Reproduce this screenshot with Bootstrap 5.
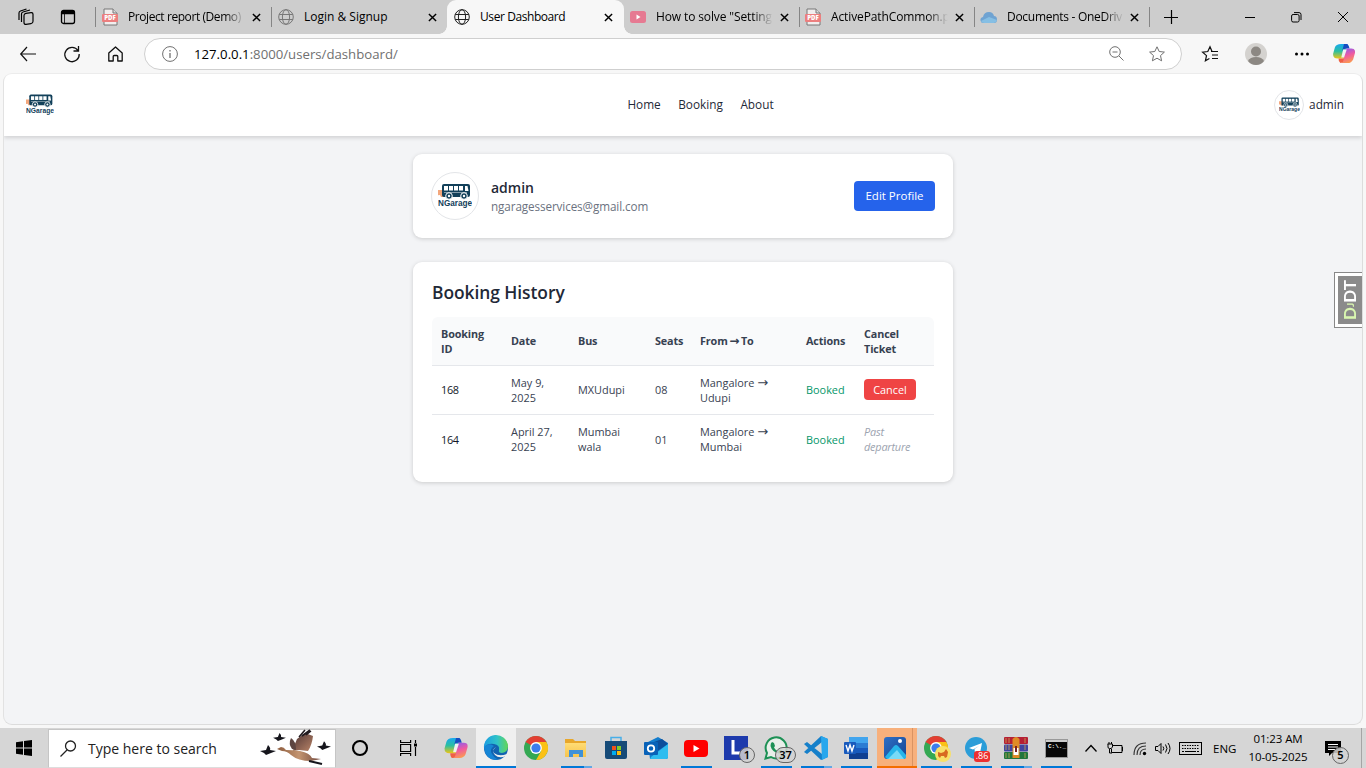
<!DOCTYPE html>
<html lang="en">
<head>
<meta charset="utf-8">
<meta name="viewport" content="width=device-width, initial-scale=1">
<title>User Dashboard</title>
<link href="https://cdn.jsdelivr.net/npm/bootstrap@5.3.0/dist/css/bootstrap.min.css" rel="stylesheet">
<style>
body{font-family:"Open Sans","Noto Sans",sans-serif;font-size:11.5px;line-height:15px;color:#374151;background:#f7f7f7;width:1366px;height:768px;overflow:hidden}
svg{display:block;flex:none;overflow:visible}
.ln{fill:none;stroke:currentColor}
.arw{font-family:"DejaVu Sans",sans-serif;font-size:13px;line-height:10px}
/* tab strip */
.strip{height:34px;background:#cdcdcd;color:#000;font-size:12px}
.lead-icons{width:95px;padding-left:17px;gap:25px}
.tab{width:176px;height:34px;padding-left:7px;position:relative}
.tab.sep::before{content:"";position:absolute;left:0;top:7px;width:1px;height:20px;background:#858585}
.tab .ttl{margin-left:10px;width:118px;white-space:nowrap;line-height:18px}
.fade-r{-webkit-mask-image:linear-gradient(90deg,#000 82%,transparent 99%);mask-image:linear-gradient(90deg,#000 82%,transparent 99%)}
.tab .x{margin-left:6px}
.tab.short{width:175px}
.tab.on{background:#f7f7f7;border-radius:9px 9px 0 0;width:177px}
.tab.on::before,.tab.on::after{content:"";position:absolute;bottom:0;width:8px;height:8px}
.tab.on::before{left:-8px;background:radial-gradient(circle at 0 0,#cdcdcd 7.5px,#f7f7f7 8px)}
.tab.on::after{right:-8px;background:radial-gradient(circle at 100% 0,#cdcdcd 7.5px,#f7f7f7 8px)}
.tight1{letter-spacing:-.28px}.tight2{letter-spacing:-.42px}.tight3{letter-spacing:-.12px}
/* toolbar */
.bar{height:39px;background:#f7f7f7;color:#111}
.addr{width:1038px;height:32px;border:1px solid #cfcfcf;border-radius:16px;background:#fff;padding:0 16px 0 17px;font-size:13.2px;color:#707070}
.addr b{font-weight:400;color:#000}
/* page */
.pagebox{width:1360px;height:652px;margin-left:3px;border:1px solid #dcdcdc;border-top-color:#ececec;border-left-color:#e2e2e2;border-radius:9px;background:#f3f4f6;overflow:hidden;position:relative}
.site{height:62px;background:#fff;box-shadow:0 2px 4px rgba(0,0,0,.14);padding:0 18px 0 18px;color:#1f2937;font-size:11.8px}
.site .links{gap:17.5px;margin-top:-1px}
.adm{margin-top:-1px}
.ava{border:1px solid #e3e5e8;border-radius:50%;background:#fff;display:flex;align-items:center;justify-content:center}
.panel{width:540px;background:#fff;border-radius:9px;box-shadow:0 1px 4px rgba(0,0,0,.17)}
.uname{font-size:14px;line-height:20px;font-weight:600;color:#1f2937}
.mail{font-size:11.7px;line-height:17px;color:#6b7280;letter-spacing:-.1px}
.btn-edit{width:81px;height:30px;background:#2563eb;color:#fff;border-radius:4px;font-size:11.5px;padding:0;border:0}
.bh{font-size:17.4px;line-height:21px;font-weight:600;color:#1f2937;letter-spacing:-.05px}
.hist{width:502px;table-layout:fixed;font-size:10.9px;border-collapse:separate;border-spacing:0}
.hist td,.hist th{height:49px;padding:0 0 1px 9px;vertical-align:middle;border-bottom:1px solid #e5e7eb;line-height:15px;white-space:nowrap}
.hist th{background:#f9fafb;font-weight:700;font-size:10.8px;letter-spacing:-.12px}
.hist th .arw{font-size:12px;margin:0 -1px}
.hist th:first-child{border-top-left-radius:6px}.hist th:last-child{border-top-right-radius:6px}
.hist tr:last-child td{border-bottom:0}
.hist .idc{color:#111827;font-weight:500;letter-spacing:-.3px}
.btn-cancel{width:52px;height:21px;line-height:20px;background:#ef4444;color:#fff;border:0;border-radius:4px;font-size:10.9px;padding:0;display:block}
.hist .booked{color:#059669;font-weight:500}
.djdt{position:absolute;right:0;top:198px;width:28px;height:56px;border:1px solid #888;border-right:0;background:#fff;padding:3px 0 3px 3px}
.djdt div{background:#8b8b8b;height:100%;writing-mode:vertical-rl;transform:rotate(180deg);text-align:center;color:#fff;font:bold 17px/24px "Lato",sans-serif}
.djdt i{color:#d9f7b0;font-style:normal}
.djdt small{font-size:10px}
/* taskbar */
.tb{height:40px;background:#d6d6d6;color:#000;margin-top:3px}
.find{width:288px;height:39px;background:#fff;border:1px solid #c5c5c5;border-bottom-color:#ddd;padding-left:11px;font-size:14px;color:#222;margin-left:48px}
.app{width:40px;height:40px;position:relative;display:flex;align-items:center;justify-content:center;flex:none}
.app.run::after{content:"";position:absolute;left:5px;width:31px;bottom:0;height:2px;background:#0078d7}
.app.multi::after{background:linear-gradient(90deg,#0078d7 75%,#62a8e5 75%)}
.app.cur{background:#efefef}.app.cur::after{left:0;width:40px}
.app.alert1{background:linear-gradient(90deg,#f7b07c 88%,#d99362 88%,#d99362 91%,#f7b07c 91%)}
.app.alert1::after{left:0;width:40px;background:#f36d00}
.cnt{position:absolute;border:1px solid #666;background:rgba(210,210,210,.85);border-radius:9px;font:600 11px/14px "Noto Sans",sans-serif;height:16px;min-width:16px;text-align:center}
.tray{font-size:11.5px}
</style>
</head>
<body class="d-flex flex-column">
<svg width="0" height="0" class="position-absolute">
<defs>
<linearGradient id="cpa" x1="0" y1="0" x2="0" y2="1"><stop offset="0" stop-color="#18a8f0"/><stop offset=".5" stop-color="#2bbfa0"/><stop offset="1" stop-color="#f0c514"/></linearGradient>
<linearGradient id="cpb" x1="0.2" y1="0" x2=".5" y2="1"><stop offset="0" stop-color="#8b5cf0"/><stop offset=".5" stop-color="#ef5aa0"/><stop offset="1" stop-color="#fb9b50"/></linearGradient>
<linearGradient id="edg" x1="0" y1=".3" x2="1" y2=".3"><stop offset="0" stop-color="#1b9de2"/><stop offset=".55" stop-color="#30c3c8"/><stop offset="1" stop-color="#63d655"/></linearGradient>
<linearGradient id="fld" x1="0" y1="0" x2="0" y2="1"><stop offset="0" stop-color="#ffdc75"/><stop offset="1" stop-color="#f6c44e"/></linearGradient>
<linearGradient id="pho" x1="0" y1="0" x2="1" y2="1"><stop offset="0" stop-color="#2d6fc6"/><stop offset="1" stop-color="#164592"/></linearGradient>
<linearGradient id="gse" x1="0" y1="0" x2="1" y2="0"><stop offset="0" stop-color="#8d5c3e"/><stop offset=".5" stop-color="#c39470"/><stop offset="1" stop-color="#70473d"/></linearGradient>
<linearGradient id="wng" x1="0" y1="0" x2="1" y2="1"><stop offset="0" stop-color="#4d3434"/><stop offset="1" stop-color="#b98468"/></linearGradient>
<symbol id="x" viewBox="0 0 10 10"><path d="M1 1l8 8M9 1L1 9" fill="none" stroke="#000" stroke-width="1.6"/></symbol>
<symbol id="pdf" viewBox="0 0 16 18"><path d="M2 1h9l4 4v12H2z" fill="#f1eeee" stroke="#777" stroke-width="1"/><path d="M11 1v4h4" fill="#ddd" stroke="#777"/><rect x="0" y="6" width="16" height="8" rx="1" fill="#ec7f7f"/><text x="8" y="12.4" text-anchor="middle" font-family="Open Sans" font-weight="800" font-size="6" fill="#fff" letter-spacing="0">PDF</text></symbol>
<symbol id="globe" viewBox="0 0 16 16"><g fill="none" stroke="currentColor"><circle cx="8" cy="8" r="7.3"/><ellipse cx="8" cy="8" rx="3.6" ry="7.3"/><path d="M1.2 5.5h13.6M1.2 10.5h13.6"/></g></symbol>
<symbol id="bus" viewBox="0 0 34 24"><path d="M0 6h6v7H3l-1-2-3 .5 1-2-2-1z" fill="#f3a77c"/><rect x="4" y="0" width="28" height="13" rx="2" fill="#12405a"/><g fill="#fff"><rect x="6" y="2" width="4" height="4.500"/><rect x="11" y="2" width="4" height="4.500"/><rect x="16" y="2" width="4" height="4.500"/><rect x="21" y="2" width="4" height="4.500"/><path d="M27 2h2.500l1 5H27z"/><rect x="6" y="8" width="23" height=".8" opacity=".6"/></g><g fill="#12405a" stroke="#fff"><circle cx="11" cy="12" r="3.300"/><circle cx="26" cy="12" r="3.300"/></g><circle cx="11" cy="12" r="1.200" fill="#fff"/><circle cx="26" cy="12" r="1.200" fill="#fff"/><text x="0" y="22" font-family="Liberation Sans" font-weight="700" font-size="8.5" fill="#12405a" textLength="34" lengthAdjust="spacingAndGlyphs">NGarage</text></symbol>
<symbol id="cop" viewBox="0 0 24 23"><path d="M9 1h7l-4 16H5q-5 0-5-5L2 5q1-4 7-4z" fill="url(#cpa)"/><path d="M12 1h3q2 0 3 5h-4q-3 0-4 3z" fill="#164cc0"/><path d="M14 6h6q5 0 4 5l-2 7q-2 4-6 4H9l3-6z" fill="url(#cpb)"/><path d="M6 17h6l-1 3q-1 2-3 2-2-1-2-5z" fill="#ef6044"/><path d="M11 7h4l-3 9H9z" fill="#f1f1f1"/></symbol>
<symbol id="chr" viewBox="0 0 24 24"><circle cx="12" cy="12" r="12" fill="#34a853"/><path d="M12 12L1.6 6A12 12 0 0 1 22.4 6z" fill="#e23f33"/><path d="M12 6h10.4A12 12 0 0 1 12 24l5.2-9z" fill="#fbc116"/><circle cx="12" cy="12" r="5.9" fill="#fff"/><circle cx="12" cy="12" r="4.6" fill="#3b7ded"/></symbol>
<symbol id="bird" viewBox="0 0 16 10"><path d="M0 6l6-1 2-5q3 3 2 5l6 1-5 2-5 2-2-2z" fill="#15151c"/></symbol>
</defs>
</svg>

<header class="strip d-flex align-items-center">
  <div class="lead-icons d-flex align-items-center">
    <svg class="ln" width="18" height="18" viewBox="0 0 18 18" stroke-width="1.2"><rect x="7" y="5" width="9" height="11" rx="2" transform="skewY(-8) translate(0 1.6)"/><path d="M4.500 14V6q0-1.500 1.500-2l7-2M2 12V5q0-1.500 1.500-2l6-2"/></svg>
    <svg class="ln" width="16" height="16" viewBox="0 0 16 16" stroke-width="1.300"><rect x="1.500" y="1.500" width="13" height="13" rx="2"/><path d="M1.500 3.500h13" stroke-width="3.500"/><path d="M4.500 5v9" stroke-width=".8"/></svg>
  </div>
  <div class="tab sep d-flex align-items-center"><svg width="16" height="18"><use href="#pdf"/></svg><span class="ttl fade-r tight2">Project report (Demo)</span><svg class="x" width="9" height="9"><use href="#x"/></svg></div>
  <div class="tab sep d-flex align-items-center"><svg width="16" height="16" style="color:#777"><use href="#globe"/></svg><span class="ttl">Login &amp; Signup</span><svg class="x" width="9" height="9"><use href="#x"/></svg></div>
  <div class="tab on d-flex align-items-center"><svg width="16" height="16" style="color:#222"><use href="#globe"/></svg><span class="ttl tight2">User Dashboard</span><svg class="x" width="9" height="9"><use href="#x"/></svg></div>
  <div class="tab short d-flex align-items-center" style="padding-left:6px"><svg width="16" height="12" viewBox="0 0 16 12"><rect width="16" height="12" rx="2.500" fill="#e67a92"/><path d="M6.500 3.500L10.500 6l-4 2.500z" fill="#fff"/></svg><span class="ttl fade-r tight3">How to solve "Setting</span><svg class="x" width="9" height="9"><use href="#x"/></svg></div>
  <div class="tab sep short d-flex align-items-center" style="padding-left:6px"><svg width="16" height="18"><use href="#pdf"/></svg><span class="ttl fade-r tight3">ActivePathCommon.p</span><svg class="x" width="9" height="9"><use href="#x"/></svg></div>
  <div class="tab sep short d-flex align-items-center"><svg width="16" height="11" viewBox="0 0 16 11"><path d="M3 11a3 3 0 0 1-1-6q1-5 6-5 4 0 5 4 3 0 3 3.500T13 11z" fill="#6fa3d2"/><path d="M3 11q-2 0-3-2l8-4 8 3q-1 3-3 3z" fill="#86bfe4"/></svg><span class="ttl fade-r tight1">Documents - OneDriv</span><svg class="x" width="9" height="9" style="margin-left:5px"><use href="#x"/></svg></div>
  <div class="tab sep d-flex align-items-center flex-fill" style="padding-left:15px"><svg class="ln" width="14" height="14" viewBox="0 0 14 14"><path d="M7.500 0v14M0 7.500h14" stroke-width="1.200"/></svg>
    <svg class="ln ms-auto" width="10" height="10"><path d="M0 5.500h10"/></svg>
    <svg class="ln" width="11" height="11" viewBox="0 0 11 11" style="margin-left:36px"><rect x=".6" y="2.500" width="7.500" height="7.500" rx="1.500"/><path d="M3 .6h5q2 0 2 2V8"/></svg>
    <svg class="ln" width="10" height="10" style="margin-left:36px;margin-right:18px"><path d="M0 0l10 10M10 0L0 10"/></svg>
  </div>
</header>

<div class="bar d-flex align-items-center">
  <svg class="ln" width="16" height="14" viewBox="0 0 16 14" style="margin-left:20px"><path d="M7 0L.7 7 7 14M.7 7H16" stroke-width="1.200"/></svg>
  <svg class="ln" width="16" height="16" viewBox="0 0 16 16" style="margin-left:28px"><path d="M14 4.500A7.200 7.200 0 1 0 15.200 8M14.500 0v5h-5" stroke-width="1.300"/></svg>
  <svg class="ln" width="15" height="16" viewBox="0 0 15 16" style="margin-left:28px"><path d="M.8 7L7.500 1l6.700 6v8H9.800v-4.500q0-1-1-1H6.200q-1 0-1 1V15H.8z" stroke-width="1.300" stroke-linejoin="round"/></svg>
  <div class="addr d-flex align-items-center" style="margin-left:21px">
    <svg width="16" height="16" viewBox="0 0 16 16"><circle cx="8" cy="8" r="7.400" fill="none" stroke="#707070"/><path d="M8 7v5M8 4v1.600" stroke="#707070" stroke-width="1.300"/></svg>
    <span style="margin-left:16px;padding-top:1px"><b>127.0.0.1</b>:8000/users/dashboard/</span>
    <svg class="ln ms-auto" width="15" height="15" viewBox="0 0 15 15"><circle cx="6" cy="6" r="5.300"/><path d="M10 10l4.500 4.500M3.500 6h5"/></svg>
    <svg class="ln" width="16" height="16" viewBox="0 0 16 16" style="margin-left:25px"><path d="M8 .8l2.200 4.700 5.200.6-3.900 3.500 1.100 5.200L8 12.200l-4.600 2.600 1.100-5.200L.6 6.100l5.200-.6z" stroke-linejoin="round"/></svg>
  </div>
  <svg class="ln" width="17" height="16" viewBox="0 0 17 16" style="margin-left:20px"><path d="M9 5.500H10L8 .8 5.800 5.500.6 6.100l3.900 3.500-1.100 5.200 4-2.300M10 5.500h6M10 9h6M10 12.500h6" stroke-width="1.200"/></svg>
  <svg width="22" height="22" viewBox="0 0 22 22" style="margin-left:26px"><circle cx="11" cy="11" r="11" fill="#d4d2cf"/><circle cx="11" cy="8.500" r="5" fill="#8c8883"/><path d="M3 18q2-4 8-4t8 4q-3 4-8 4t-8-4z" fill="#8c8883"/></svg>
  <svg width="14" height="4" viewBox="0 0 14 4" style="margin-left:28px"><circle cx="1.500" cy="2" r="1.500"/><circle cx="7" cy="2" r="1.500"/><circle cx="12.500" cy="2" r="1.500"/></svg>
  <svg width="22" height="21" style="margin-left:24px"><use href="#cop"/></svg>
</div>

<main class="pagebox">
  <nav class="site d-flex align-items-center justify-content-between position-relative">
    <svg width="28" height="21" style="margin-left:4px;margin-top:-1px"><use href="#bus"/></svg>
    <div class="links d-flex position-absolute start-0 end-0 justify-content-center" style="padding-left:35px"><span>Home</span><span>Booking</span><span>About</span></div>
    <div class="d-flex align-items-center"><span class="ava" style="width:30px;height:30px"><svg width="21" height="16"><use href="#bus"/></svg></span><span class="adm" style="margin-left:5px">admin</span></div>
  </nav>
  <section class="panel mx-auto d-flex align-items-center px-3" style="height:84px;margin-top:18px">
    <span class="ava" style="width:48px;height:48px;margin-left:2px"><svg width="34" height="26"><use href="#bus"/></svg></span>
    <div style="margin-left:12px"><div class="uname">admin</div><div class="mail">ngaragesservices@gmail.com</div></div>
    <button class="btn btn-edit ms-auto" style="margin-right:2px">Edit Profile</button>
  </section>
  <section class="panel mx-auto" style="height:220px;margin-top:24px;padding:20px 19px">
    <h2 class="bh mb-0">Booking History</h2>
    <table class="hist" style="margin-top:14px">
      <colgroup><col style="width:70px"><col style="width:67px"><col style="width:77px"><col style="width:45px"><col style="width:106px"><col style="width:58px"><col></colgroup>
      <thead><tr><th>Booking<br>ID</th><th>Date</th><th>Bus</th><th>Seats</th><th>From <span class="arw">→</span> To</th><th>Actions</th><th>Cancel<br>Ticket</th></tr></thead>
      <tbody>
      <tr><td class="idc">168</td><td>May 9,<br>2025</td><td>MXUdupi</td><td>08</td><td>Mangalore <span class="arw">→</span><br>Udupi</td><td class="booked">Booked</td><td><button class="btn btn-cancel">Cancel</button></td></tr>
      <tr><td class="idc">164</td><td>April 27,<br>2025</td><td>Mumbai<br>wala</td><td>01</td><td>Mangalore <span class="arw">→</span><br>Mumbai</td><td class="booked">Booked</td><td class="fst-italic" style="color:#9ca3af;letter-spacing:-.2px">Past<br>departure</td></tr>
      </tbody>
    </table>
  </section>
  <aside class="djdt"><div><i>D<small>J</small></i>DT</div></aside>
</main>

<footer class="tb d-flex align-items-center position-relative">
  <svg class="position-absolute" style="left:16px" width="16" height="16" viewBox="0 0 16 16"><path d="M0 2.200l7-1v6.300H0zM8 1l8-1v7.500H8zM0 8.500h7v6.300l-7-1zM8 8.500h8V16l-8-1z"/></svg>
  <div class="find d-flex align-items-center">
    <svg class="ln" width="16" height="17" viewBox="0 0 16 17"><circle cx="10.500" cy="6" r="5" stroke-width="1.300"/><path d="M7 10L.5 16.500" stroke-width="1.300"/></svg>
    <span style="margin-left:12px">Type here to search</span>
    <svg class="ms-auto" width="72" height="36" viewBox="0 0 72 36" style="margin-right:3px"><g><use href="#bird" x="13" y="3" width="13" height="8"/><use href="#bird" x="0" y="15" width="16" height="10"/><use href="#bird" x="57" y="11" width="14" height="9"/></g><path d="M37 9l8-6 8 3q-1 9-5 15l-9-1-6 1q1-6 4-12z" fill="url(#wng)"/><path d="M39 7l6-7M42 6l8-6M46 5l5-4" stroke="#221b20" stroke-width="1.600"/><path d="M31 8q5 3 5 12l-4-1q-4-5-1-11z" fill="#5d4541"/><path d="M17 19l4-2q3 0 5 3 7 0 14 1 10 2 12 7l9 1-10 2q-13 0-20-6-4-4-9-4z" fill="url(#gse)"/><path d="M49 31l13 3" stroke="#15151c" stroke-width="2"/></svg>
  </div>
  <div class="app" style="width:48px"><svg width="16" height="16"><circle cx="8" cy="8" r="7" fill="none" stroke="#000" stroke-width="2.100"/></svg></div>
  <div class="app" style="width:48px"><svg class="ln" width="17" height="16" viewBox="0 0 17 16" stroke-width="1.200"><path d="M.6 0v2.500h10V0M.6 16v-2.500h10V16M.6 4.500h10v7H.6zM15.500 0v3M15.500 7v9"/><path d="M14 5h3" stroke-width="3"/></svg></div>
  <div class="app" style="margin-left:4px"><svg width="24" height="22"><use href="#cop"/></svg></div>
  <div class="app run cur"><svg width="24" height="24" viewBox="0 0 24 24"><circle cx="12" cy="12" r="12" fill="#1263b1"/><path d="M0 12A12 12 0 0 1 24 10q0 6-6 7-4 0-3-3 1-5-5-6Q3 7 0 12z" fill="url(#edg)"/><path d="M0 11q5-5 10-1-5 3-2 8 2 4 6 5.500Q2 25 0 12z" fill="#1685d5"/><path d="M12 11q-4 2-2 6 5 4 13 1l-1 2q-7 3-11-1-4-4 1-8z" fill="#efefef"/></svg></div>
  <div class="app"><svg width="24" height="24"><use href="#chr"/></svg></div>
  <div class="app run multi"><svg width="22" height="18" viewBox="0 0 22 18"><path d="M0 0h8l2 2h11v16H0z" fill="#e8a72b"/><path d="M0 4h21v14H0z" fill="url(#fld)"/><path d="M4 18v-7h14v7h-4v-3H8v3z" fill="#3e91d8"/></svg></div>
  <div class="app"><svg width="24" height="24" viewBox="0 0 24 24"><path d="M7 6V1.500h10V6" fill="none" stroke="#48aee8" stroke-width="1.500"/><path d="M1 5h22v16q0 2-2 2H3q-2 0-2-2z" fill="#164b78"/><path d="M8 10h4v4H8z" fill="#f1511b"/><path d="M13 10h4v4h-4z" fill="#80cc28"/><path d="M8 15h4v4H8z" fill="#00adef"/><path d="M13 15h4v4h-4z" fill="#fbbc09"/></svg></div>
  <div class="app"><svg width="24" height="24" viewBox="0 0 24 24"><path d="M4 6l10-5 10 6v14q0 2-2 2H6z" fill="#147dcd"/><path d="M10 6l8-3 6 5-12 8z" fill="#0d4f9c"/><path d="M7 21l17-13v13q0 2-2 2H6z" fill="#2fbdef"/><rect y="6" width="14" height="13" rx="1" fill="#0962b8"/><circle cx="7" cy="12.500" r="3.200" fill="none" stroke="#fff" stroke-width="1.800"/></svg></div>
  <div class="app run"><svg width="24" height="17" viewBox="0 0 24 17"><rect width="24" height="17" rx="4" fill="#f00"/><path d="M9.500 5l6 3.500-6 3.500z" fill="#fff"/></svg></div>
  <div class="app"><svg width="24" height="24" viewBox="0 0 24 24"><path d="M0 0h24v24H0z" fill="#1d3aac"/><path d="M9 4v13h7" fill="none" stroke="#fff" stroke-width="3"/></svg><span class="cnt" style="left:23px;top:19px">1</span></div>
  <div class="app run"><svg width="24" height="24" viewBox="0 0 24 24"><path d="M1.500 22.500L3 17A10.500 10.500 0 1 1 7 21z" fill="#e8efe9" stroke="#1d9155" stroke-width="2"/><path d="M8 6l2 1 1 3-1 1.500q1 2 3.500 3.500l1.500-2 3 1.500q0 3-3 3Q8 16 6.500 10q0-3 1.500-4z" fill="#1d9155"/></svg><span class="cnt" style="left:19px;top:19px;width:21px;z-index:2">37</span></div>
  <div class="app run multi"><svg width="24" height="24" viewBox="0 0 24 24"><path d="M17 0l7 3v18l-7 3L0 8l3-2 15 12V6L3 18l-3-2z" fill="#1680ca"/><path d="M17 0l7 3v18l-6 3z" fill="#28a7ed"/></svg></div>
  <div class="app run"><svg width="24" height="22" viewBox="0 0 24 22"><path d="M5 0h19v6H5z" fill="#41a5ee"/><path d="M5 6h19v5H5z" fill="#2b7cd3"/><path d="M5 11h19v5H5z" fill="#185abd"/><path d="M5 16h19v6H5z" fill="#103f91"/><rect y="5" width="12" height="12" rx="1" fill="#185abd"/><path d="M2 8l2 6 2-6 2 6 2-6" fill="none" stroke="#fff" stroke-width="1.400"/></svg></div>
  <div class="app run alert1" style="left:1px"><svg width="23" height="22" viewBox="0 0 23 22" style="margin-right:3px"><rect width="22" height="22" rx="3" fill="url(#pho)"/><path d="M1 20L10 9q2-2 4 0l8 9v2q0 2-3 2H3z" fill="#27b5ea"/><path d="M4 22l9-9 7 9z" fill="#78daf6"/><circle cx="16" cy="4" r="2" fill="#fff"/></svg></div>
  <div class="app run"><svg width="24" height="24"><use href="#chr"/></svg><svg class="position-absolute" style="left:19px;top:18px" width="16" height="16" viewBox="0 0 16 16"><circle cx="8" cy="8" r="8" fill="#f8e068"/><path d="M3 6l3 1 3-1 2-3 2 3-1 5-2 1-1-2H6l-1 2-2-2z" fill="#d86a20"/></svg></div>
  <div class="app run"><svg width="22" height="22" viewBox="0 0 22 22"><circle cx="11" cy="11" r="11" fill="#2b9dd8"/><path d="M4 11l13-5-2 10-3-2-2 2-.5-4L14 9l-6 3.500z" fill="#fff"/></svg><span class="position-absolute text-white" style="left:18px;top:23px;width:16px;height:11px;background:#ed3030;border-radius:3px;font:9px/10px Open Sans,sans-serif;text-align:center">.86</span></div>
  <div class="app run multi"><svg width="24" height="22" viewBox="0 0 24 22"><rect width="24" height="7" rx="1" fill="#b51f34"/><rect y="7.500" width="24" height="7" rx="1" fill="#4144a0"/><rect y="15" width="24" height="7" rx="1" fill="#20763e"/><path d="M2 1v5M5 1v5M2 8v5M5 8v5M2 16v5M5 16v5M21 1v5M21 8v5M21 16v5" stroke="#c8a850" stroke-width=".8"/><path d="M8.500 2q3.500-4 7 0v19h-7z" fill="#df8b26"/><path d="M9.500 11h5v7h-5z" fill="#fff"/><path d="M12 9v6" stroke="#722" stroke-width="2"/></svg></div>
  <div class="app run"><svg width="23" height="19" viewBox="0 0 23 19"><rect x=".5" y=".5" width="22" height="18" fill="#080808" stroke="#999"/><path d="M1 1h21v2H1z" fill="#ccc"/><text x="3" y="9" font-family="Liberation Mono" font-weight="700" font-size="6" fill="#fff">C:\._</text></svg></div>
  <div class="tray d-flex align-items-center flex-fill h-100">
    <svg class="ln" width="12" height="7" style="margin-left:9px"><path d="M.5 6.500l5.500-6 5.500 6" stroke-width="1.300"/></svg>
    <svg class="ln" width="16" height="12" viewBox="0 0 16 12" style="margin-left:10px"><path d="M5.500 3.500H15v7H4.500V6.500M1 2v3q0 1.500 1.500 1.500H4L5.500 5V2H.5M2 0v2M4.500 0v2M2.500 7v4H5M15.500 5v4"/></svg>
    <svg width="13" height="13" viewBox="0 0 13 13" style="margin-left:10px"><g fill="none" stroke="#333" stroke-width="1.100"><path d="M1 13Q1 1 13 1M4 13q0-9 9-9M7 13q0-6 6-6"/></g><circle cx="11.500" cy="11.500" r="1.700"/></svg>
    <svg class="ln" width="16" height="13" viewBox="0 0 16 13" style="margin-left:9px"><path d="M.5 4.500H3L6 1.500v10L3 8.500H.5zM8 4.500q1.500 2 0 4M10.500 2.500q3 4 0 8M13 1q4 5.500 0 11"/></svg>
    <svg class="ln" width="23" height="13" viewBox="0 0 23 13" style="margin-left:8px"><rect x=".5" y=".5" width="22" height="12"/><path d="M3 3.500h17M3 6.500h17" stroke-dasharray="1.500 1"/><path d="M3 9.500h2M6 9.500h11M18 9.500h2"/></svg>
    <span style="margin-left:11px;width:24px">ENG</span>
    <div class="text-center" style="width:62px;margin-left:10px;line-height:18px;letter-spacing:-.1px"><div>01:23 AM</div><div>10-05-2025</div></div>
    <div class="position-relative" style="margin-left:16px"><svg width="16" height="15" viewBox="0 0 16 15"><path d="M0 0h16v12H7l-3 3v-3H0z"/><path d="M3 3.500h10M3 6h10M3 8.500h7" stroke="#fff"/></svg><span class="cnt" style="left:7px;top:6px;width:17px;height:17px">5</span></div>
    <span class="ms-auto h-100" style="width:5px;border-left:1px solid #a5a5a5"></span>
  </div>
</footer>
<script src="https://cdn.jsdelivr.net/npm/bootstrap@5.3.0/dist/js/bootstrap.bundle.min.js"></script>
</body>
</html>
